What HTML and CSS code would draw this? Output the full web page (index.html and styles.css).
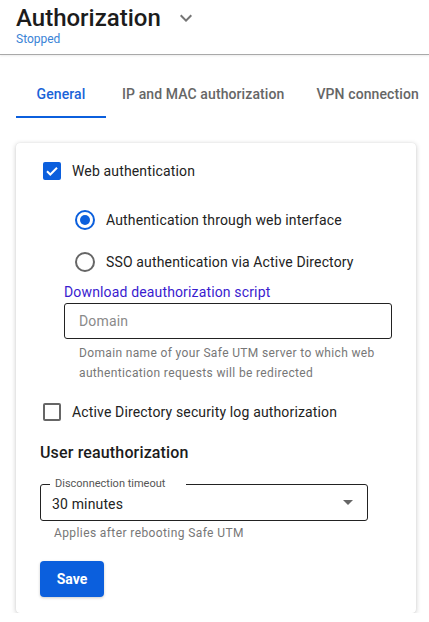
FILE: index.html
```html
<!DOCTYPE html>
<html lang="en">
<head>
<meta charset="utf-8">
<title>Authorization</title>
<link rel="stylesheet" href="styles.css">
</head>
<body>
<header class="page-header">
  <div class="title-row">
    <h1 class="title">Authorization</h1>
    <svg class="chevron" width="24" height="24" viewBox="0 0 24 24"><path d="M16.59 8.59L12 13.17 7.41 8.59 6 10l6 6 6-6z" fill="#757575"/></svg>
  </div>
  <div class="status">Stopped</div>
</header>

<nav class="tabs">
  <div class="tab active">General</div>
  <div class="tab">IP and MAC authorization</div>
  <div class="tab">VPN connection</div>
</nav>

<section class="card">
  <label class="check-row">
    <span class="checkbox checked">
      <svg width="18" height="18" viewBox="0 0 18 18"><path d="M4 9.2l3.3 3.3L14 5.8" fill="none" stroke="#fff" stroke-width="2"/></svg>
    </span>
    <span class="label">Web authentication</span>
  </label>

  <div class="radio-group">
    <label class="radio-row">
      <span class="radio checked"><span class="dot"></span></span>
      <span class="label">Authentication through web interface</span>
    </label>
    <label class="radio-row">
      <span class="radio"></span>
      <span class="label">SSO authentication via Active Directory</span>
    </label>
  </div>

  <div class="indent">
    <a class="link" href="#">Download deauthorization script</a>
    <div class="input-box"><span class="placeholder">Domain</span></div>
    <div class="hint">Domain name of your Safe UTM server to which web authentication requests will be redirected</div>
  </div>

  <label class="check-row second">
    <span class="checkbox"></span>
    <span class="label">Active Directory security log authorization</span>
  </label>

  <h2 class="section-title">User reauthorization</h2>

  <div class="select-box">
    <span class="select-label">Disconnection timeout</span>
    <span class="select-value">30 minutes</span>
    <span class="select-arrow"></span>
  </div>
  <div class="select-hint">Applies after rebooting Safe UTM</div>

  <button class="save">Save</button>
</section>
</body>
</html>
```

FILE: styles.css
```css
* { box-sizing: border-box; }

body {
  margin: 0;
  background: #fff;
  font-family: Roboto, "Noto Sans", Arial, sans-serif;
  color: #212121;
  overflow: hidden;
}

.page-header {
  padding: 4px 16px 8px;
  border-bottom: 1px solid #a9a9a9;
  box-shadow: 0 1px 2px rgba(0, 0, 0, 0.08);
  height: 55px;
}

.title-row {
  display: flex;
  align-items: center;
  height: 28px;
}

.title {
  margin: 0;
  font-size: 24px;
  line-height: 28px;
  font-weight: 500;
  color: #1c1c1c;
}

.chevron {
  margin-left: 13px;
  display: block;
}

.status {
  font-size: 12px;
  line-height: 14px;
  color: #3a83d6;
}

.tabs {
  display: flex;
  margin: 15px 0 0 16px;
  height: 48px;
  overflow: hidden;
}

.tab {
  flex: none;
  white-space: nowrap;
  min-width: 90px;
  padding: 2px 16px 0;
  display: flex;
  align-items: center;
  justify-content: center;
  font-size: 14px;
  font-weight: 500;
  letter-spacing: 0.1px;
  color: #666;
  border-bottom: 2px solid transparent;
}

.tab.active {
  color: #1a63d8;
  border-bottom-color: #0b5fdd;
}

.card {
  width: 400px;
  margin: 25px 0 0 16px;
  padding: 16px 24px 16px;
  border-radius: 4px;
  box-shadow: 0 1px 5px rgba(0, 0, 0, 0.22), 0 0 1px rgba(0, 0, 0, 0.1);
  background: #fff;
}

.check-row {
  display: flex;
  align-items: center;
  height: 24px;
}

.check-row.second {
  margin-top: 17px;
}

.checkbox {
  width: 18px;
  height: 18px;
  margin: 0 8px 0 3px;
  border: 2px solid #666;
  border-radius: 2px;
  flex: none;
  display: flex;
}

.checkbox.checked {
  border: none;
  background: #0b5fdd;
}

.label {
  font-size: 14px;
  letter-spacing: 0.15px;
  color: #222;
}

.check-row .label {
  margin-left: 3px;
}

.radio-group {
  margin: 16px 0 0 33px;
}

.radio-row {
  display: flex;
  align-items: center;
  height: 42px;
}

.radio {
  width: 20px;
  height: 20px;
  margin: 0 11px 0 2px;
  border: 2px solid #666;
  border-radius: 50%;
  display: flex;
  align-items: center;
  justify-content: center;
  flex: none;
}

.radio.checked {
  border-color: #0b5fdd;
}

.dot {
  width: 10px;
  height: 10px;
  border-radius: 50%;
  background: #0b5fdd;
}

.indent {
  margin-left: 24px;
}

.link {
  display: block;
  font-size: 14px;
  line-height: 18px;
  letter-spacing: 0.15px;
  color: #3a1ccf;
  text-decoration: none;
}

.input-box {
  margin-top: 2px;
  height: 36px;
  border: 1px solid #222;
  border-radius: 3px;
  padding: 0 14px;
  display: flex;
  align-items: center;
}

.placeholder {
  font-size: 14px;
  letter-spacing: 0.15px;
  color: #8a8a8a;
}

.hint {
  margin-top: 4px;
  padding: 0 0 0 15px;
  font-size: 12px;
  line-height: 20px;
  letter-spacing: 0.35px;
  color: #777;
}

.section-title {
  margin: 17px 0 0;
  font-size: 16px;
  line-height: 24px;
  font-weight: 500;
  letter-spacing: 0.15px;
  color: #1c1c1c;
}

.select-box {
  position: relative;
  margin-top: 19px;
  width: 328px;
  height: 37px;
  border: 1px solid #222;
  border-radius: 3px;
  display: flex;
  align-items: center;
  padding: 0 11px;
}

.select-label {
  position: absolute;
  left: 9px;
  top: -8px;
  padding: 0 21px 0 5px;
  background: #fff;
  font-size: 11px;
  line-height: 14px;
  color: #555;
}

.select-value {
  font-size: 14px;
  letter-spacing: 0.15px;
  color: #222;
  flex: 1;
  padding-top: 2px;
}

.select-arrow {
  width: 0;
  height: 0;
  border-left: 5px solid transparent;
  border-right: 5px solid transparent;
  border-top: 5px solid #666;
  margin-right: 3px;
}

.select-hint {
  margin-top: 4px;
  padding-left: 14px;
  font-size: 12px;
  line-height: 16px;
  letter-spacing: 0.4px;
  color: #777;
}

.save {
  display: block;
  margin-top: 20px;
  width: 64px;
  height: 36px;
  border: none;
  border-radius: 4px;
  background: #0b5fdd;
  color: #fff;
  font-family: inherit;
  font-size: 14px;
  font-weight: 700;
  box-shadow: 0 1px 3px rgba(0, 0, 0, 0.2);
}
```
